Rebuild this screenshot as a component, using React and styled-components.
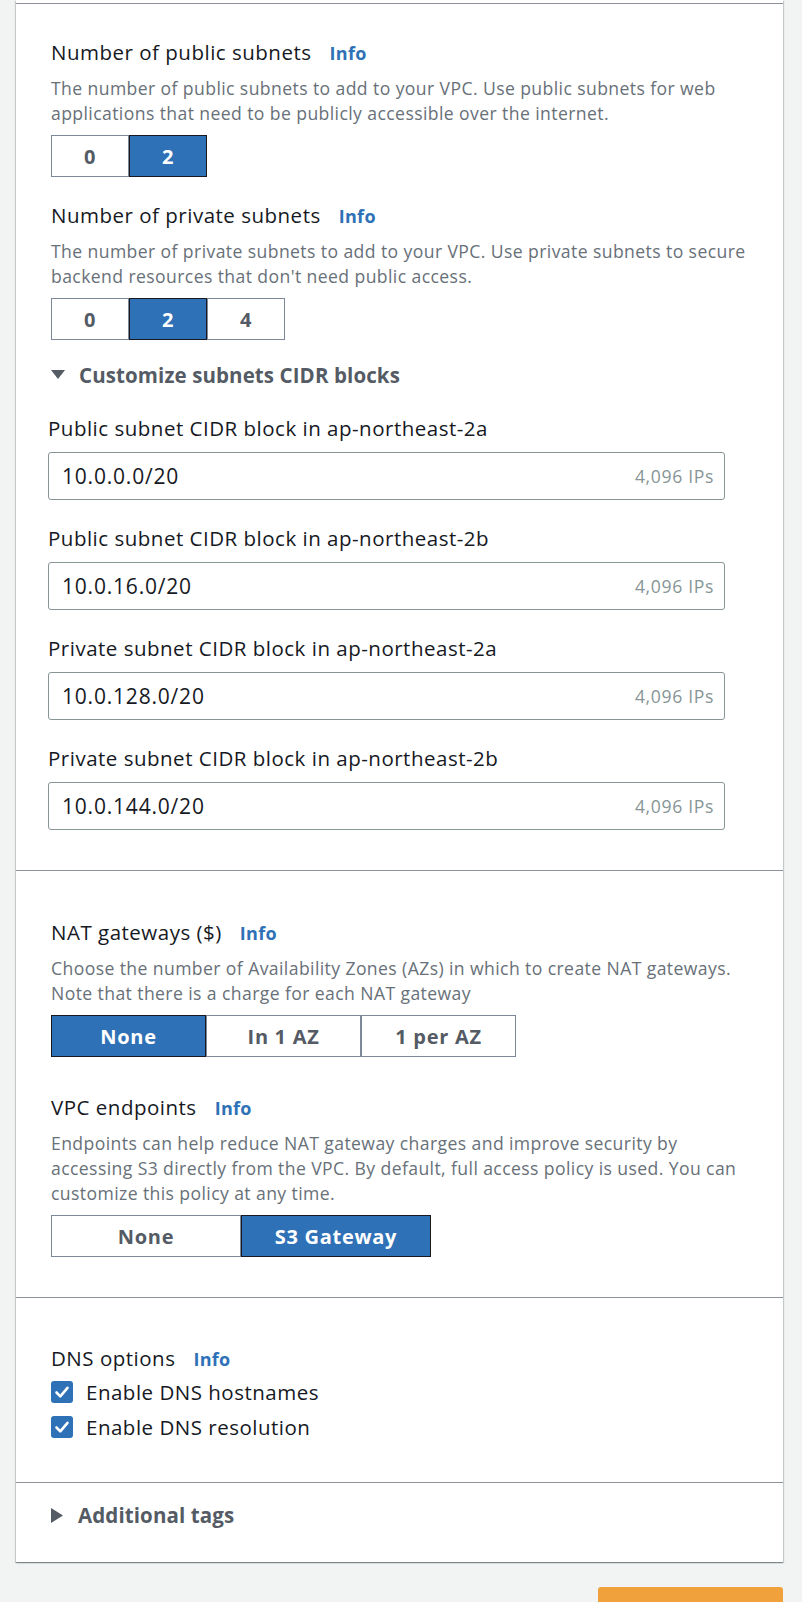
import React from 'react'
import styled, { createGlobalStyle } from 'styled-components'

const GlobalStyle = createGlobalStyle`
    html, body {
        margin: 0;
        padding: 0;
        background: #f2f3f3;
        overflow: hidden;
    }
    body {
        font-family: "Open Sans", "Noto Sans", Arial, sans-serif;
        color: #16191f;
    }
`

const BLUE = '#2f71b6'

const cidrBlocks = [
    { label: 'Public subnet CIDR block in ap-northeast-2a', value: '10.0.0.0/20' },
    { label: 'Public subnet CIDR block in ap-northeast-2b', value: '10.0.16.0/20' },
    { label: 'Private subnet CIDR block in ap-northeast-2a', value: '10.0.128.0/20' },
    { label: 'Private subnet CIDR block in ap-northeast-2b', value: '10.0.144.0/20' },
]

const SegmentedControl = ({ options, selected, width }) => (
    <Segments>
        {options.map(option => (
            <Segment key={option} width={width} active={option === selected}>{option}</Segment>
        ))}
    </Segments>
)

const Check = () => (
    <svg width="22" height="22" viewBox="0 0 22 22">
        <rect x="0" y="0" width="22" height="22" rx="3" fill={BLUE} />
        <path d="M5.5 11.5 L9.3 15.3 L16.5 6.8" fill="none" stroke="#fff" strokeWidth="2.6" strokeLinecap="round" strokeLinejoin="round" />
    </svg>
)

const Field = ({ label, description, children, top }) => (
    <FieldBox top={top}>
        <Label>{label}<Info>Info</Info></Label>
        {description && <Description>{description}</Description>}
        {children}
    </FieldBox>
)

const App = () => {
    return (
        <>
            <GlobalStyle />
            <Page>
                <Card>
                    <Section top={34} bottom={40}>
                        <Field label="Number of public subnets" description="The number of public subnets to add to your VPC. Use public subnets for web applications that need to be publicly accessible over the internet.">
                            <SegmentedControl options={['0', '2']} selected="2" width={78} />
                        </Field>
                        <Field top={24} label="Number of private subnets" description="The number of private subnets to add to your VPC. Use private subnets to secure backend resources that don't need public access.">
                            <SegmentedControl options={['0', '2', '4']} selected="2" width={78} />
                        </Field>
                        <Expander>
                            <svg width="14" height="10" viewBox="0 0 14 10"><polygon points="0,0 14,0 7,9" fill="#545b64" /></svg>
                            Customize subnets CIDR blocks
                        </Expander>
                        <CidrGroup>
                            {cidrBlocks.map(block => (
                                <CidrField key={block.label}>
                                    <CidrLabel>{block.label}</CidrLabel>
                                    <Input>
                                        <Value>{block.value}</Value>
                                        <Hint>4,096 IPs</Hint>
                                    </Input>
                                </CidrField>
                            ))}
                        </CidrGroup>
                    </Section>
                    <Section top={47} bottom={40}>
                        <Field label="NAT gateways ($)" description="Choose the number of Availability Zones (AZs) in which to create NAT gateways. Note that there is a charge for each NAT gateway">
                            <SegmentedControl options={['None', 'In 1 AZ', '1 per AZ']} selected="None" width={155} />
                        </Field>
                        <Field top={36} label="VPC endpoints" description="Endpoints can help reduce NAT gateway charges and improve security by accessing S3 directly from the VPC. By default, full access policy is used. You can customize this policy at any time.">
                            <SegmentedControl options={['None', 'S3 Gateway']} selected="S3 Gateway" width={190} />
                        </Field>
                    </Section>
                    <Section top={46} bottom={41}>
                        <Field label="DNS options">
                            <Checks>
                                <CheckRow><Check />Enable DNS hostnames</CheckRow>
                                <CheckRow><Check />Enable DNS resolution</CheckRow>
                            </Checks>
                        </Field>
                    </Section>
                    <Section top={18} bottom={33}>
                        <Expander collapsed>
                            <svg width="12" height="15" viewBox="0 0 12 15"><polygon points="0,0 12,7.5 0,15" fill="#545b64" /></svg>
                            Additional tags
                        </Expander>
                    </Section>
                </Card>
                <Actions>
                    <PrimaryButton aria-label="Create VPC" />
                </Actions>
            </Page>
        </>
    )
}

export default App

const Page = styled.div`
    width: 802px;
    padding: 0 19px 0 16px;
    box-sizing: border-box;
`
const Card = styled.div`
    background: #fff;
    padding-top: 3px;
    box-shadow: 0 1px 1px 0 rgba(0, 28, 36, 0.3), 1px 1px 1px 0 rgba(0, 28, 36, 0.15), -1px 1px 1px 0 rgba(0, 28, 36, 0.15);
`
const Section = styled.div`
    border-top: 1px solid #8d9399;
    padding: ${props => props.top}px 35px ${props => props.bottom}px 35px;
    display: flex;
    flex-direction: column;
`
const FieldBox = styled.div`
    display: flex;
    flex-direction: column;
    margin-top: ${props => props.top || 0}px;
`
const Label = styled.div`
    height: 28px;
    font-size: 20.5px;
    line-height: 28px;
    letter-spacing: 0.5px;
    color: #16191f;
    white-space: nowrap;
`
const Info = styled.span`
    font-size: 18px;
    line-height: 0;
    letter-spacing: 0.3px;
    font-weight: 700;
    color: ${BLUE};
    margin-left: 18px;
`
const Description = styled.div`
    margin-top: 10px;
    font-size: 17.6px;
    line-height: 25px;
    letter-spacing: 0.4px;
    color: #687078;
`
const Segments = styled.div`
    display: flex;
    margin-top: 9px;
`
const Segment = styled.div`
    position: relative;
    z-index: ${props => props.active ? 1 : 0};
    box-sizing: border-box;
    width: ${props => props.width}px;
    height: 42px;
    display: flex;
    align-items: center;
    justify-content: center;
    font-size: 20px;
    letter-spacing: 0.7px;
    font-weight: 700;
    color: ${props => props.active ? '#fff' : '#545b64'};
    background: ${props => props.active ? BLUE : '#fff'};
    border: 1px solid ${props => props.active ? '#16191f' : '#7d8998'};
    :not(:first-child) { margin-left: -1px; }
    :first-child { border-radius: 3px 0 0 3px; }
    :last-child { border-radius: 0 3px 3px 0; }
`
const Expander = styled.div`
    margin-top: ${props => props.collapsed ? 0 : 21}px;
    display: flex;
    align-items: center;
    gap: ${props => props.collapsed ? 15 : 14}px;
    font-size: 20.5px;
    line-height: 28px;
    letter-spacing: 0.1px;
    font-weight: 700;
    color: #545b64;
    > svg { flex-shrink: 0; }
`
const CidrGroup = styled.div`
    margin: 25px 0 0 -3px;
    display: flex;
    flex-direction: column;
    gap: 24px;
`
const CidrField = styled.div`
    display: flex;
    flex-direction: column;
    gap: 10px;
`
const CidrLabel = styled.div`
    font-size: 20.5px;
    line-height: 28px;
    letter-spacing: 0.5px;
    color: #16191f;
`
const Input = styled.div`
    box-sizing: border-box;
    width: 677px;
    height: 48px;
    border: 1px solid #879596;
    border-radius: 3px;
    display: flex;
    align-items: center;
    justify-content: space-between;
    padding: 0 10px 0 13px;
    color: #16191f;
`
const Value = styled.span`
    font-size: 21px;
    letter-spacing: 0.8px;
`
const Hint = styled.span`
    font-size: 17.6px;
    letter-spacing: 0.65px;
    color: #879596;
`
const Checks = styled.div`
    margin-top: 6px;
    display: flex;
    flex-direction: column;
    gap: 7px;
`
const CheckRow = styled.div`
    display: flex;
    align-items: center;
    gap: 13px;
    font-size: 20.5px;
    line-height: 28px;
    letter-spacing: 0.5px;
    color: #16191f;
    > svg { flex-shrink: 0; }
`
const Actions = styled.div`
    display: flex;
    justify-content: flex-end;
    padding-top: 25px;
`
const PrimaryButton = styled.div`
    width: 185px;
    height: 40px;
    border-radius: 3px;
    background: #f0a13b;
`
